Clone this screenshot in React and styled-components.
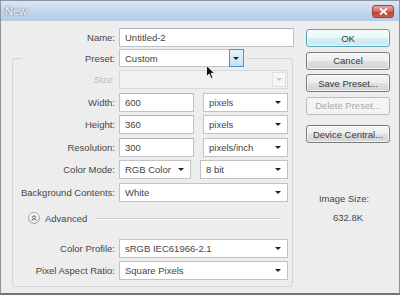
import React from 'react'
import styled, { createGlobalStyle } from 'styled-components'

const GlobalStyle = createGlobalStyle`
html, body {
    margin: 0;
    padding: 0;
    background: #ffffff;
}
body {
    font-family: "Liberation Sans", Arial, sans-serif;
    font-size: 9.5px;
    color: #474747;
}
`

export default function App() {
    return (
        <>
            <GlobalStyle />
            <Window>
                <TitleBar>
                    <Title>New</Title>
                    <CloseButton>
                        <svg width="9" height="7" viewBox="0 0 9 7">
                            <path d="M1 0.5 L8 6.5 M8 0.5 L1 6.5" stroke="#fff" strokeWidth="1.8" />
                        </svg>
                    </CloseButton>
                </TitleBar>

                <Body>
                    <Main>
                        <Row>
                            <Label $w={103}>Name:</Label>
                            <TextInput $w={175}>Untitled-2</TextInput>
                        </Row>

                        <Group>
                            <Legend>
                                <Label $w={93}>Preset:</Label>
                                <Select $w={125} $hot>
                                    <span>Custom</span>
                                    <HotArrow><Arrow /></HotArrow>
                                </Select>
                            </Legend>

                            <Row>
                                <Label $w={102} $disabled>Size:</Label>
                                <Select $grow $disabled>
                                    <span></span>
                                    <DisabledArrow><Arrow $disabled /></DisabledArrow>
                                </Select>
                            </Row>
                            <Row>
                                <Label $w={102}>Width:</Label>
                                <TextInput $w={75}>600</TextInput>
                                <Select $grow $gap={5}><span>pixels</span><Arrow /></Select>
                            </Row>
                            <Row>
                                <Label $w={102}>Height:</Label>
                                <TextInput $w={75}>360</TextInput>
                                <Select $grow $gap={5}><span>pixels</span><Arrow /></Select>
                            </Row>
                            <Row>
                                <Label $w={102}>Resolution:</Label>
                                <TextInput $w={75}>300</TextInput>
                                <Select $grow $gap={5}><span>pixels/inch</span><Arrow /></Select>
                            </Row>
                            <Row>
                                <Label $w={102}>Color Mode:</Label>
                                <Select $w={72}><span>RGB Color</span><Arrow /></Select>
                                <Select $grow $gap={5}><span>8 bit</span><Arrow /></Select>
                            </Row>
                            <Row>
                                <Label $w={102}>Background Contents:</Label>
                                <Select $grow><span>White</span><Arrow /></Select>
                            </Row>

                            <AdvancedRow>
                                <AdvancedToggle>
                                    <svg width="6" height="6" viewBox="0 0 6 6">
                                        <path d="M0.8 2.6 L3 0.6 L5.2 2.6 M0.8 5.3 L3 3.3 L5.2 5.3" stroke="#444" strokeWidth="1" fill="none" />
                                    </svg>
                                </AdvancedToggle>
                                <span>Advanced</span>
                                <AdvancedLine />
                            </AdvancedRow>

                            <Row>
                                <Label $w={102}>Color Profile:</Label>
                                <Select $grow><span>sRGB IEC61966-2.1</span><Arrow /></Select>
                            </Row>
                            <Row>
                                <Label $w={102}>Pixel Aspect Ratio:</Label>
                                <Select $grow><span>Square Pixels</span><Arrow /></Select>
                            </Row>
                        </Group>
                    </Main>

                    <Side>
                        <Button $default>OK</Button>
                        <Button>Cancel</Button>
                        <Button>Save Preset...</Button>
                        <Button $disabled>Delete Preset...</Button>
                        <Button $spaced>Device Central...</Button>
                        <ImageInfo>
                            <InfoLabel>Image Size:</InfoLabel>
                            <span>632.8K</span>
                        </ImageInfo>
                    </Side>
                </Body>

                <Cursor>
                    <svg width="11" height="15" viewBox="0 0 11 15">
                        <path d="M0.5 0.5 L0.5 11.5 L3.2 9 L5.2 13.6 L7 12.8 L5 8.3 L8.6 8.3 Z" fill="#111" stroke="#fff" strokeWidth="0.8" />
                    </svg>
                </Cursor>
            </Window>
        </>
    )
}

// Styled Components
const Window = styled.div`
position: relative;
box-sizing: border-box;
width: 400px;
height: 295px;
border: 1px solid #8a949f;
border-bottom: 2px solid #6d747c;
background-color: #ededed;
display: flex;
flex-direction: column;
overflow: hidden;
`

const TitleBar = styled.div`
height: 20px;
flex-shrink: 0;
display: flex;
align-items: center;
justify-content: space-between;
padding: 0 5px 0 4px;
background: linear-gradient(#d9e6f4, #c0d5ec 60%, #b5cde7);
`

const Title = styled.span`
font-size: 11px;
color: #ffffff;
text-shadow: 0 0 1px #56697e, 0 0 3px #7489a0;
`

const CloseButton = styled.div`
box-sizing: border-box;
width: 22px;
height: 13px;
border-radius: 3px;
border: 1px solid #9a4438;
background: linear-gradient(#eaa79c, #d3685a 50%, #c24332 55%, #cc5c48);
display: flex;
align-items: center;
justify-content: center;
`

const Body = styled.div`
flex: 1;
display: flex;
gap: 12px;
padding: 7px 9px 0 11px;
`

const Main = styled.div`
width: 282px;
display: flex;
flex-direction: column;
`

const Row = styled.div`
display: flex;
align-items: center;
height: 19px;
gap: 4px;
`

const Label = styled.span`
flex-shrink: 0;
width: ${p => p.$w}px;
text-align: right;
white-space: nowrap;
color: ${p => (p.$disabled ? '#bcbcbc' : '#474747')};
`

const TextInput = styled.div`
box-sizing: border-box;
width: ${p => p.$w}px;
height: 100%;
display: flex;
align-items: center;
padding: 0 5px;
background: #ffffff;
border: 1px solid #bcc3cc;
border-top-color: #aab2bc;
color: #444;
`

const Select = styled.div`
box-sizing: border-box;
height: 100%;
${p => (p.$grow ? 'flex: 1;' : `width: ${p.$w}px; flex-shrink: 0;`)}
margin-left: ${p => p.$gap || 0}px;
display: flex;
align-items: center;
justify-content: space-between;
padding: ${p => (p.$hot || p.$disabled ? '0 0 0 5px' : '0 5px 0 5px')};
background: ${p => (p.$disabled ? '#f2f2f2' : '#ffffff')};
border: 1px solid ${p => (p.$disabled ? '#d8d8d8' : '#c2c2c2')};
color: #444;
`

const Arrow = styled.span`
width: 0;
height: 0;
margin-right: 1px;
border-left: 3px solid transparent;
border-right: 3px solid transparent;
border-top: 3px solid ${p => (p.$disabled ? '#c4c4c4' : '#222')};
`

const HotArrow = styled.span`
box-sizing: border-box;
align-self: stretch;
width: 15px;
display: flex;
align-items: center;
justify-content: center;
background: linear-gradient(#e4f3fc, #c3e3f7);
border: 1px solid #5590c0;
margin: -1px -1px -1px 0;
`

const DisabledArrow = styled.span`
box-sizing: border-box;
align-self: stretch;
width: 14px;
display: flex;
align-items: center;
justify-content: center;
margin: 1px 1px 1px 0;
border: 1px solid #e0e0e0;
background: #f7f7f7;
`

const Group = styled.fieldset`
box-sizing: border-box;
width: 281px;
margin: 2px 0 0;
padding: 3px 4px 6px 0;
border: 1px solid #d2d5d8;
border-radius: 3px;
display: flex;
flex-direction: column;
gap: 3.5px;
`

const Legend = styled.legend`
display: flex;
align-items: center;
gap: 4px;
height: 18px;
margin-left: 9px;
padding: 0 3px 0 0;
`

const AdvancedRow = styled.div`
display: flex;
align-items: center;
gap: 5px;
height: 16px;
margin: 5px 0 9px;
padding-left: 15px;
color: #474747;
`

const AdvancedToggle = styled.span`
box-sizing: border-box;
width: 12px;
height: 12px;
border-radius: 50%;
border: 1px solid #a8a8a8;
background: linear-gradient(#ffffff, #e4e4e4);
display: flex;
align-items: center;
justify-content: center;
`

const AdvancedLine = styled.span`
flex: 1;
height: 1px;
margin: 0 9px 0 4px;
background: #c8c8c8;
box-shadow: 0 1px 0 #fafafa;
`

const Side = styled.div`
width: 84px;
display: flex;
flex-direction: column;
gap: 4.5px;
padding-top: 1px;
`

const Button = styled.div`
box-sizing: border-box;
height: 18px;
display: flex;
align-items: center;
justify-content: center;
border-radius: 3px;
margin-top: ${p => (p.$spaced ? 6 : 0)}px;
border: 1px solid ${p => (p.$default ? '#5aa2b8' : p.$disabled ? '#b8bcbf' : '#7a7a7a')};
background: ${p =>
        p.$default
            ? 'linear-gradient(#f4fbfd, #e8f6fa 50%, #d6eef5 51%, #cae8f1)'
            : p.$disabled
                ? '#f4f4f4'
                : 'linear-gradient(#f6f6f6, #ededed 50%, #e0e0e0 51%, #d4d4d4)'};
color: ${p => (p.$disabled ? '#aaaaaa' : '#383838')};
box-shadow: ${p => (p.$disabled ? 'none' : 'inset 0 0 0 1px rgba(255,255,255,0.7)')};
`

const ImageInfo = styled.div`
margin-top: 45px;
display: flex;
flex-direction: column;
align-items: center;
gap: 7px;
line-height: 12px;
color: #474747;
`

const InfoLabel = styled.span`
margin-right: 8px;
`

const Cursor = styled.div`
position: absolute;
left: 205px;
top: 64px;
width: 11px;
height: 15px;
`
